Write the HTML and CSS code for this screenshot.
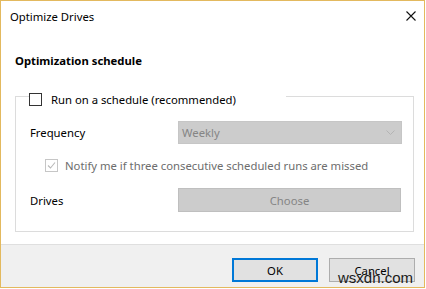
FILE: index.html
```html
<!DOCTYPE html>
<html lang="en">
<head>
    <meta charset="UTF-8">
    <meta name="viewport" content="width=device-width, initial-scale=1.0">
    <title>Optimize Drives</title>
    <link rel="stylesheet" href="styles.css">
</head>
<body>
    <div class="window">
        <div class="titlebar">
            <span class="title">Optimize Drives</span>
            <svg class="close" width="10" height="10" viewBox="0 0 10 10">
                <path d="M0.5 0.5 L9.5 9.5 M9.5 0.5 L0.5 9.5" stroke="#111" stroke-width="1.1" fill="none"/>
            </svg>
        </div>

        <div class="content">
            <h2 class="section-title">Optimization schedule</h2>

            <fieldset class="group">
                <legend class="group-legend">
                    <span class="checkbox"></span>
                    <span>Run on a schedule (recommended)</span>
                </legend>

                <div class="row row-frequency">
                    <span class="row-label">Frequency</span>
                    <div class="select">
                        <span>Weekly</span>
                        <svg class="chevron" width="9" height="5" viewBox="0 0 9 5">
                            <path d="M0.5 0.5 L4.5 4.5 L8.5 0.5" stroke="#b4b4b4" stroke-width="1" fill="none"/>
                        </svg>
                    </div>
                </div>

                <div class="row-notify">
                    <span class="checkbox checkbox-disabled">
                        <svg width="11" height="11" viewBox="0 0 11 11">
                            <path d="M2 5.5 L4.5 8 L9 2.5" stroke="#b9b9b9" stroke-width="1.1" fill="none"/>
                        </svg>
                    </span>
                    <span>Notify me if three consecutive scheduled runs are missed</span>
                </div>

                <div class="row row-drives">
                    <span class="row-label">Drives</span>
                    <button type="button" class="btn-disabled">Choose</button>
                </div>
            </fieldset>
        </div>

        <div class="footer">
            <button type="button" class="btn btn-default">OK</button>
            <button type="button" class="btn">Cancel</button>
        </div>

        <span class="watermark">wsxdn.com</span>
    </div>
</body>
</html>
```

FILE: styles.css
```css
body {
    margin: 0;
    background-color: #fff;
    font-family: 'Noto Sans', 'Open Sans', sans-serif;
    font-size: 11.3px;
    color: #000;
}

.window {
    position: relative;
    width: 425px;
    height: 288px;
    box-sizing: border-box;
    border: 1px solid #e3b95e;
    display: flex;
    flex-direction: column;
    background-color: #fff;
}

.titlebar {
    height: 30px;
    display: flex;
    align-items: center;
    justify-content: space-between;
    padding: 0 8px 0 9px;
}

.title {
    font-size: 11.3px;
}

.content {
    flex: 1;
    padding: 0 10px 0 14px;
}

.section-title {
    margin: 21px 0 0 0;
    font-size: 11.3px;
    font-weight: bold;
    line-height: 17px;
}

.group {
    margin: 15px 0 0 0;
    padding: 0 10px 13px 13px;
    border: 1px solid #dcdcdc;
    height: 148px;
    box-sizing: border-box;
}

.group-legend {
    width: 257px;
    box-sizing: border-box;
    padding: 7px 0 0 0;
    display: flex;
    align-items: center;
    line-height: 17px;
}

.checkbox {
    width: 13px;
    height: 13px;
    box-sizing: border-box;
    border: 1px solid #333;
    background-color: #fff;
    margin-right: 9px;
    display: inline-flex;
    align-items: center;
    justify-content: center;
}

.checkbox-disabled {
    border-color: #c6c6c6;
    margin-right: 7px;
}

.row {
    display: grid;
    grid-template-columns: 149px 224px;
    align-items: center;
}

.row-frequency {
    margin-top: 13px;
}

.row-label {
    padding-left: 1px;
}

.select {
    height: 23px;
    box-sizing: border-box;
    background-color: #cccccc;
    border: 1px solid #c6c6c6;
    color: #858585;
    display: flex;
    align-items: center;
    justify-content: space-between;
    padding: 0 6px 0 3px;
}

.row-notify {
    display: flex;
    align-items: center;
    margin: 14px 0 0 16px;
    color: #6d6d6d;
}

.row-drives {
    margin-top: 15px;
    grid-template-columns: 149px 223px;
}

.btn-disabled {
    height: 24px;
    font-family: inherit;
    font-size: 11.3px;
    background-color: #cccccc;
    border: 1px solid #bfbfbf;
    color: #858585;
    padding: 0;
}

.footer {
    height: 43px;
    box-sizing: border-box;
    border-top: 1px solid #dfdfdf;
    background-color: #f0f0f0;
    display: flex;
    justify-content: flex-end;
    gap: 11px;
    padding: 13px 9px 0 0;
}

.btn {
    width: 86px;
    height: 24px;
    font-family: inherit;
    font-size: 11.3px;
    background-color: #e1e1e1;
    border: 1px solid #adadad;
    color: #000;
    padding: 0;
}

.btn-default {
    border: 2px solid #0078d7;
}

.watermark {
    position: absolute;
    right: 11px;
    bottom: 2px;
    font-family: 'Liberation Sans', sans-serif;
    font-size: 15px;
    color: #1a1a1a;
    line-height: 14px;
}
```
